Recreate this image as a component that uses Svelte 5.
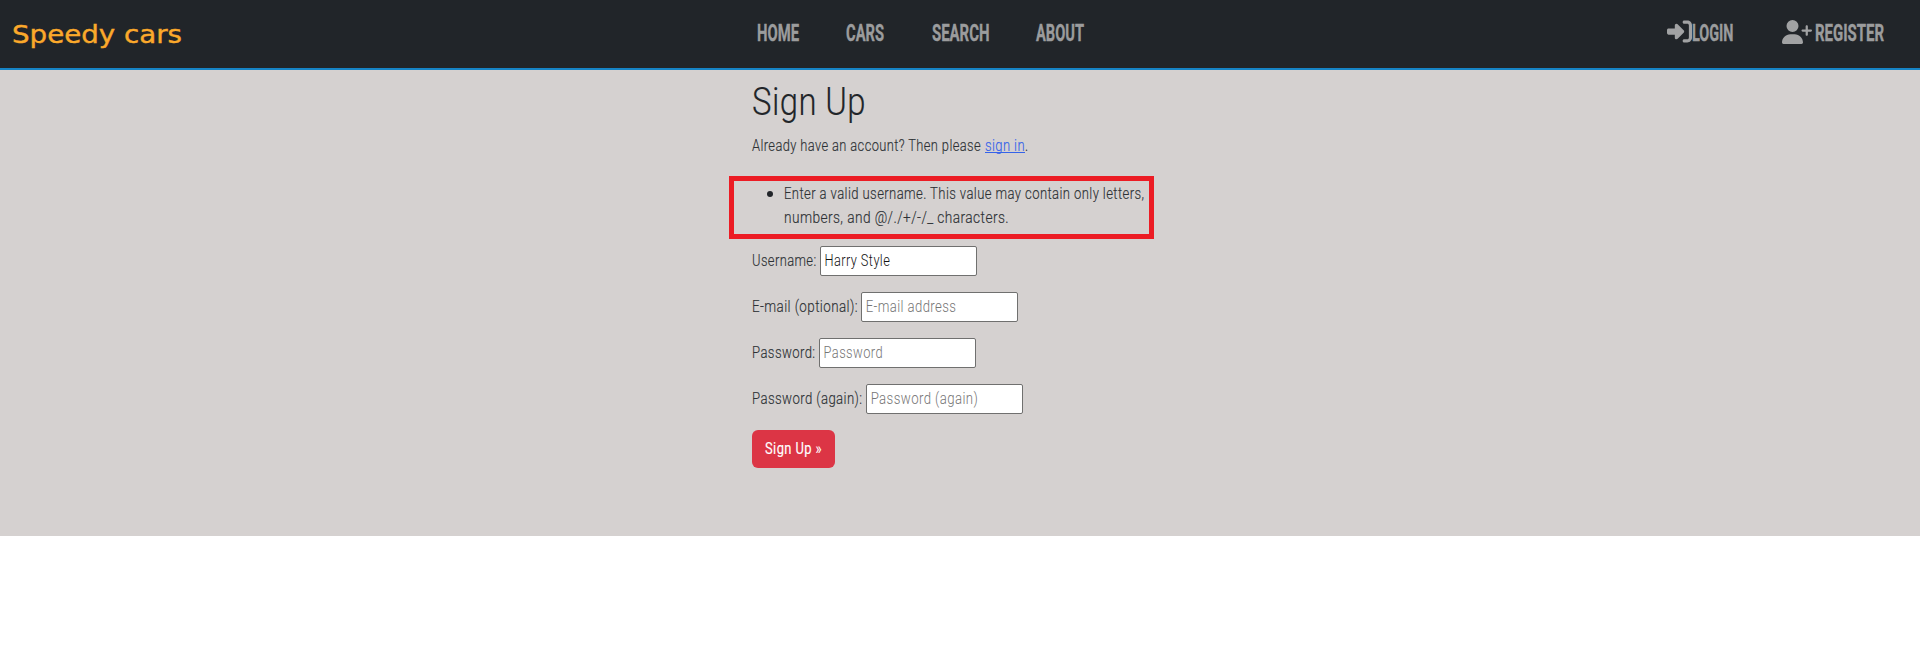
<script>
  const links = [
    { text: 'HOME', width: 42 },
    { text: 'CARS', width: 38 },
    { text: 'SEARCH', width: 57.5 },
    { text: 'ABOUT', width: 48 }
  ];
  const fields = [
    { label: 'Username:', width: 64.5, type: 'text', value: 'Harry Style', placeholder: '', gap: 3.5, scale: 0.8 },
    { label: 'E-mail (optional):', width: 106, type: 'email', value: '', placeholder: 'E-mail address', gap: 3, scale: 0.82 },
    { label: 'Password:', width: 63.5, type: 'password', value: '', placeholder: 'Password', gap: 3.5, scale: 0.805 },
    { label: 'Password (again):', width: 110.5, type: 'password', value: '', placeholder: 'Password (again)', gap: 3.5, scale: 0.825 }
  ];
</script>

{#snippet line(text, width, size)}
  <svg class="line" {width} height={size * 1.5} aria-label={text}>
    <text x="0" y={size * 1.1 - 0.5} font-size={size} textLength={width} lengthAdjust="spacingAndGlyphs">{text}</text>
  </svg>
{/snippet}

<header>
  <a class="brand" href="#home">{@render line('Speedy cars', 170, 24)}</a>
  <nav class="main-links">
    {#each links as link}
      <a href="#{link.text.toLowerCase()}">{@render line(link.text, link.width, 24)}</a>
    {/each}
  </nav>
  <nav class="account">
    <a href="#login">
      <svg class="login-icon" viewBox="0 0 512 512"><path d="M217.9 105.9L340.7 228.7c7.2 7.2 11.3 17.1 11.3 27.3s-4.1 20.1-11.3 27.3L217.9 406.1c-6.4 6.4-15 9.9-24 9.9c-18.7 0-33.9-15.2-33.9-33.9l0-62.1L32 320c-17.7 0-32-14.3-32-32l0-64c0-17.7 14.3-32 32-32l128 0 0-62.1c0-18.7 15.2-33.9 33.9-33.9c9 0 17.6 3.6 24 9.9zM352 416l64 0c17.7 0 32-14.3 32-32l0-256c0-17.7-14.3-32-32-32l-64 0c-17.7 0-32-14.3-32-32s14.3-32 32-32l64 0c53 0 96 43 96 96l0 256c0 53-43 96-96 96l-64 0c-17.7 0-32-14.3-32-32s14.3-32 32-32z" /></svg>
      {@render line('LOGIN', 41.5, 24)}
    </a>
    <a href="#register">
      <svg class="register-icon" viewBox="0 0 640 512"><path d="M96 128a128 128 0 1 1 256 0A128 128 0 1 1 96 128zM0 482.3C0 383.8 79.8 304 178.3 304l91.4 0C368.2 304 448 383.8 448 482.3c0 16.4-13.3 29.7-29.7 29.7L29.7 512C13.3 512 0 498.7 0 482.3zM504 312l0-64-64 0c-13.3 0-24-10.7-24-24s10.7-24 24-24l64 0 0-64c0-13.3 10.7-24 24-24s24 10.7 24 24l0 64 64 0c13.3 0 24 10.7 24 24s-10.7 24-24 24l-64 0 0 64c0 13.3-10.7 24-24 24s-24-10.7-24-24z" /></svg>
      {@render line('REGISTER', 69, 24)}
    </a>
  </nav>
</header>

<main>
  <h1>{@render line('Sign Up', 114, 39)}</h1>
  <p>
    {@render line('Already have an account? Then please', 229, 16)}
    <a href="#signin">{@render line('sign in', 40, 16)}</a>
    {@render line('.', 3.5, 16)}
  </p>
  <ul class="errors">
    <li>
      {@render line('Enter a valid username. This value may contain only letters,', 360.5, 16)}
      {@render line('numbers, and @/./+/-/_ characters.', 225, 16)}
    </li>
  </ul>
  <form>
    {#each fields as field}
      <label style:gap="{field.gap}px">
        {@render line(field.label, field.width, 16)}
        <span class="box">
          <input
            type={field.type}
            value={field.value}
            placeholder={field.placeholder}
            style:width="{151 / field.scale}px"
            style:transform="scaleX({field.scale})"
          />
        </span>
      </label>
    {/each}
    <button type="button">{@render line('Sign Up »', 57, 16)}</button>
  </form>
</main>

<style>
  :global(body) {
    margin: 0;
    background: #fff;
    font-family: Roboto, sans-serif;
  }
  header {
    box-sizing: border-box;
    height: 70px;
    display: grid;
    grid-template-columns: 757px 1fr auto;
    align-items: start;
    background: #212529;
    border-bottom: 2px solid #1684c5;
  }
  header a {
    display: flex;
    color: #9b9c9d;
    font-weight: 700;
  }
  header nav .line {
    stroke: currentColor;
    stroke-width: 0.4px;
  }
  header .brand {
    padding: 17px 0 0 12px;
    color: #fba92b;
    font-family: "DejaVu Sans", sans-serif;
    font-weight: 400;
    stroke: currentColor;
    stroke-width: 0.4px;
  }
  .line {
    display: block;
    flex: none;
    overflow: visible;
    fill: currentColor;
  }
  main .line {
    letter-spacing: 0.5px;
    stroke: currentColor;
    stroke-width: 0.15px;
  }
  .main-links {
    display: flex;
    gap: 47.3px;
    padding-top: 15px;
  }
  .account {
    display: flex;
    gap: 48.5px;
    padding: 15px 36px 0 0;
  }
  .login-icon {
    width: 25px;
    height: 25px;
    margin-top: 4px;
    fill: #a1a2a3;
  }
  .register-icon {
    width: 30px;
    height: 24px;
    margin: 5px 3px 0 0;
    fill: #a1a2a3;
  }
  main {
    box-sizing: border-box;
    height: 466px;
    padding: 3px 0 0 752px;
    background: #d5d1d0;
    color: #2d3135;
    font-weight: 300;
  }
  h1 {
    margin: 0;
    height: 61px;
    color: #212529;
    font-weight: 300;
  }
  p {
    display: flex;
    margin: 0;
    height: 42px;
  }
  p a {
    margin-left: 4px;
    color: #3563e9;
    height: 18px;
    border-bottom: 1px solid #3563e9;
  }
  .errors {
    box-sizing: border-box;
    width: 425px;
    height: 63px;
    margin: 0 0 7px -23px;
    padding: 1px 0 0 33px;
    border: 5px solid #ec1c24;
    list-style: none;
  }
  li {
    display: grid;
    grid-template-columns: 17px auto;
  }
  li::before {
    content: "";
    grid-row: 1 / 3;
    width: 6px;
    height: 6px;
    margin: 9px 0 0 0;
    border-radius: 50%;
    background: #212529;
  }
  li .line {
    grid-column: 2;
  }
  label {
    display: flex;
    align-items: center;
    height: 30px;
    margin-bottom: 16px;
  }
  .box {
    box-sizing: border-box;
    width: 157px;
    height: 30px;
    padding: 0 2px;
    overflow: hidden;
    background: #fff;
    border: 1px solid #70706f;
    border-radius: 2px;
  }
  input {
    display: block;
    box-sizing: border-box;
    height: 27px;
    padding: 0 2px;
    border: 0;
    outline: 0;
    background: transparent;
    color: #111;
    font: 300 16px Roboto, sans-serif;
    letter-spacing: 0.5px;
    transform-origin: left;
  }
  input::placeholder {
    color: #757575;
    opacity: 1;
  }
  button {
    display: flex;
    align-items: center;
    width: 83px;
    height: 38px;
    padding: 0 0 0 13px;
    border: 0;
    border-radius: 6px;
    background: #dc3545;
    color: #fff;
    font-family: Roboto, sans-serif;
  }
</style>
